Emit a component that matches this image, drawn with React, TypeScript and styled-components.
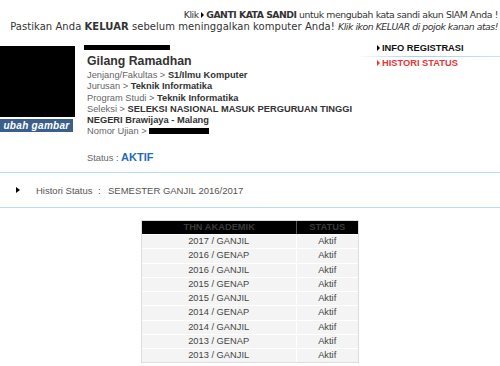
import React from "react";
import styled, { createGlobalStyle } from "styled-components";

const Global = createGlobalStyle`
  html, body { margin: 0; padding: 0; background: #fff; }
  body { font-family: "Liberation Sans", Arial, sans-serif; color: #333; width: 500px; overflow: hidden; }
`;

const Page = styled.div`
  width: 500px;
  height: 366px;
  overflow: hidden;
`;

const Notice = styled.div`
  padding: 7px 2px 0 0;
  text-align: right;
  font-family: "DejaVu Sans", Verdana, sans-serif;
  line-height: 12px;
  color: #333;
  white-space: nowrap;
`;

const NoticeLine = styled.div`
  height: 12px;
`;

const Seg = styled.span<{ $size: number; $ls: number; $bold?: boolean; $italic?: boolean }>`
  font-size: ${(p) => p.$size}px;
  letter-spacing: ${(p) => p.$ls}px;
  font-weight: ${(p) => (p.$bold ? "bold" : "normal")};
  font-style: ${(p) => (p.$italic ? "italic" : "normal")};
`;

const Arrow = styled.span<{ $color?: string; $size?: number }>`
  display: inline-block;
  width: 0;
  height: 0;
  border-top: ${(p) => p.$size ?? 3.5}px solid transparent;
  border-bottom: ${(p) => p.$size ?? 3.5}px solid transparent;
  border-left: ${(p) => (p.$size ?? 3.5) + 0.5}px solid ${(p) => p.$color ?? "#000"};
  margin-right: 2px;
  vertical-align: 0;
`;

const Profile = styled.div`
  display: flex;
  margin-top: 14px;
  height: 127px;
`;

const PhotoCol = styled.div`
  width: 76px;
  padding-top: 1px;
  display: flex;
  flex-direction: column;
`;

const Photo = styled.div`
  width: 75px;
  height: 71px;
  background: #000;
`;

const ChangeBtn = styled.div`
  margin-top: 2px;
  width: 73px;
  height: 13px;
  background: #3a5f8c;
  color: #fff;
  font-weight: bold;
  font-style: italic;
  font-size: 10px;
  line-height: 13px;
  text-align: center;
  letter-spacing: 0.3px;
`;

const Info = styled.div`
  flex: 1;
  padding-left: 11px;
  font-size: 9.3px;
  color: #666;
`;

const Redacted = styled.span<{ $w: number; $h?: number }>`
  width: ${(p) => p.$w}px;
  height: ${(p) => p.$h ?? 5}px;
  background: #000;
  display: inline-block;
`;

const TopBar = styled.div`
  margin-left: -3px;
  height: 5px;
  line-height: 0;
`;

const Name = styled.div`
  margin-top: 4px;
  font-weight: bold;
  font-size: 12.3px;
  line-height: 14px;
  color: #333;
`;

const Detail = styled.div`
  line-height: 11.3px;
  margin-top: 2px;
`;

const Line = styled.div`
  white-space: normal;
`;

const Val = styled.b`
  color: #333;
`;

const Status = styled.div`
  margin-top: 12px;
  font-size: 9.3px;
  color: #666;
  line-height: 14px;
`;

const StatusVal = styled.span`
  color: #1f6db5;
  font-weight: bold;
  font-size: 11px;
`;

const Menu = styled.div`
  width: 144px;
  margin-top: -2px;
  font-size: 9.3px;
  font-weight: bold;
`;

const MenuItem = styled.div<{ $active?: boolean }>`
  padding-left: 21px;
  line-height: 11px;
  height: 11px;
  color: ${(p) => (p.$active ? "#e8353b" : "#111")};
`;

const MenuRule = styled.div`
  height: 1px;
  margin: 2px 0 1px;
  background: linear-gradient(to right, rgba(170, 210, 230, 0) 0%, #a9d3e6 40%, #c8e4f0 100%);
`;

const Rule = styled.div`
  height: 1px;
  background: #b8dcec;
`;

const HistoriRow = styled.div`
  display: flex;
  align-items: center;
  height: 34px;
  font-size: 9.5px;
  color: #555;
  padding-left: 16px;
  white-space: nowrap;
`;

const HLabel = styled.span`
  margin-left: 14px;
  width: 62px;
`;

const HSep = styled.span`
  width: 10px;
`;

const TableWrap = styled.div`
  display: flex;
  justify-content: center;
  margin-top: 12px;
  padding-right: 1px;
`;

const Table = styled.table`
  border-collapse: separate;
  border-spacing: 0;
  border: 1px solid #ddd;
  font-size: 9.3px;
  width: 218px;
`;

const Th = styled.th<{ $w: number }>`
  width: ${(p) => p.$w}px;
  background: #000;
  color: #3a3a3a;
  font-weight: bold;
  height: 13px;
  line-height: 13px;
  padding: 0;
  border-left: 1px solid ${(p) => (p.$w < 100 ? "#555" : "transparent")};
`;

const Td = styled.td<{ $sep?: boolean }>`
  background: #f4f4f4;
  color: #444;
  text-align: center;
  padding: 0;
  height: 13.25px;
  line-height: 13.25px;
  border-top: 1px solid #fff;
  border-left: ${(p) => (p.$sep ? "1px solid #fff" : "none")};
`;

const rows = [
  "2017 / GANJIL",
  "2016 / GENAP",
  "2016 / GANJIL",
  "2015 / GENAP",
  "2015 / GANJIL",
  "2014 / GENAP",
  "2014 / GANJIL",
  "2013 / GENAP",
  "2013 / GANJIL",
];

export default function App() {
  return (
    <Page>
      <Global />
      <Notice>
        <NoticeLine>
          <Seg $size={9.3} $ls={-0.4}>Klik </Seg>
          <Arrow $size={3} />
          <Seg $size={9.3} $ls={-0.5} $bold>GANTI KATA SANDI</Seg>
          <Seg $size={9.3} $ls={-0.4}> untuk mengubah kata sandi akun SIAM Anda !</Seg>
        </NoticeLine>
        <NoticeLine>
          <Seg $size={10} $ls={0.05}>
            Pastikan Anda <b>KELUAR</b> sebelum meninggalkan komputer Anda!{" "}
          </Seg>
          <Seg $size={9.3} $ls={-0.45} $italic>Klik ikon KELUAR di pojok kanan atas!</Seg>
        </NoticeLine>
      </Notice>
      <Profile>
        <PhotoCol>
          <Photo />
          <ChangeBtn>ubah gambar</ChangeBtn>
        </PhotoCol>
        <Info>
          <TopBar>
            <Redacted $w={86} />
          </TopBar>
          <Name>Gilang Ramadhan</Name>
          <Detail>
            <Line>
              Jenjang/Fakultas &gt; <Val>S1/Ilmu Komputer</Val>
            </Line>
            <Line>
              Jurusan &gt; <Val>Teknik Informatika</Val>
            </Line>
            <Line>
              Program Studi &gt; <Val>Teknik Informatika</Val>
            </Line>
            <Line>
              Seleksi &gt; <Val>SELEKSI NASIONAL MASUK PERGURUAN TINGGI NEGERI Brawijaya - Malang</Val>
            </Line>
            <Line>
              Nomor Ujian &gt; <Redacted $w={60} $h={6} />
            </Line>
          </Detail>
          <Status>
            Status : <StatusVal>AKTIF</StatusVal>
          </Status>
        </Info>
        <Menu>
          <MenuItem>
            <Arrow $size={3} />INFO REGISTRASI
          </MenuItem>
          <MenuRule />
          <MenuItem $active>
            <Arrow $size={3} $color="#e8353b" />HISTORI STATUS
          </MenuItem>
        </Menu>
      </Profile>
      <Rule />
      <HistoriRow>
        <Arrow $size={3.5} />
        <HLabel>Histori Status</HLabel>
        <HSep>:</HSep>
        <span>SEMESTER GANJIL 2016/2017</span>
      </HistoriRow>
      <Rule />
      <TableWrap>
        <Table>
          <thead>
            <tr>
              <Th $w={155}>THN AKADEMIK</Th>
              <Th $w={61}>STATUS</Th>
            </tr>
          </thead>
          <tbody>
            {rows.map((r) => (
              <tr key={r}>
                <Td>{r}</Td>
                <Td $sep>Aktif</Td>
              </tr>
            ))}
          </tbody>
        </Table>
      </TableWrap>
    </Page>
  );
}
